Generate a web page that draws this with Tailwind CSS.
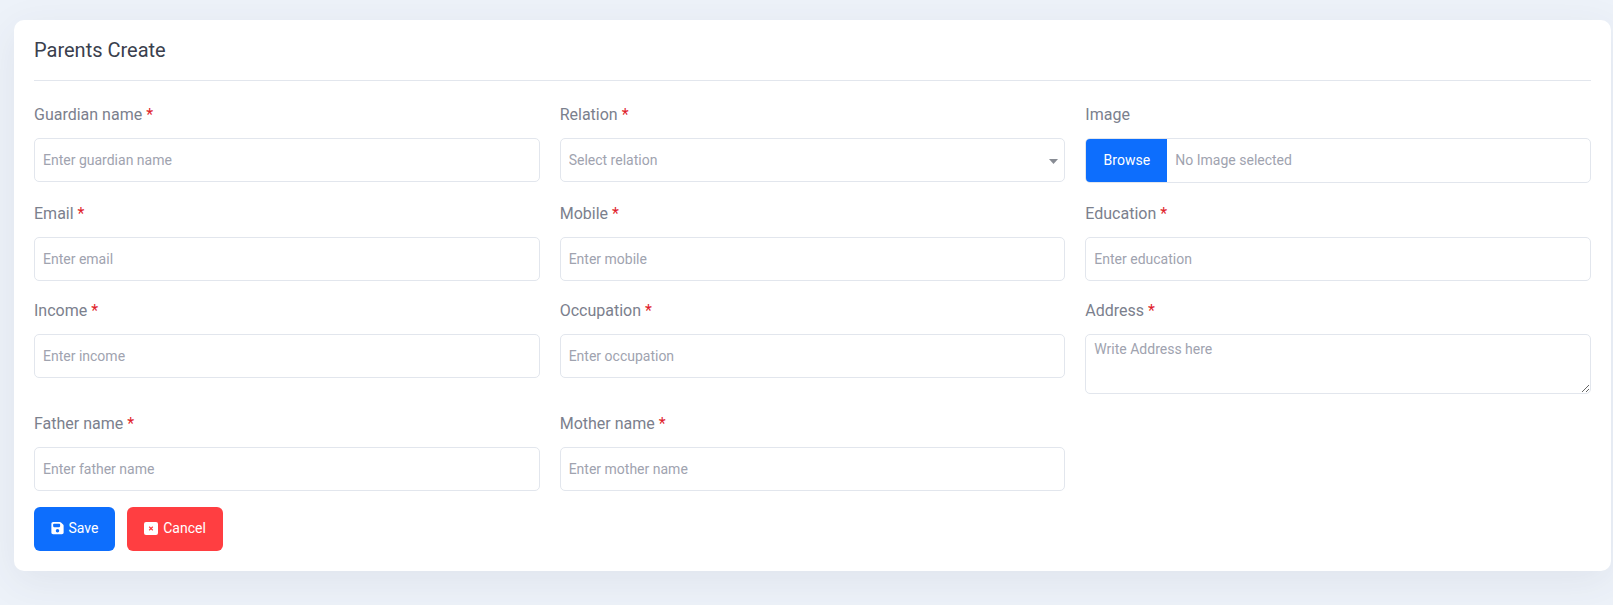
<!DOCTYPE html>
<html lang="en">
<head>
    <meta charset="UTF-8">
    <title>Parents Create</title>
    <script src="https://cdn.jsdelivr.net/npm/@tailwindcss/browser@4"></script>
</head>
<body class="bg-[#edf2f9] font-['Roboto',sans-serif] h-[605px] overflow-hidden">
    <main class="pt-5 pl-[14px] pr-[2px]">
        <div class="bg-white rounded-[10px] shadow-[0_10px_40px_rgba(60,70,90,0.08)] h-[551px] px-5">
            <h1 class="text-[20px] leading-[24px] text-[#3a404d] pt-[18px] pb-[18px] border-b border-[#e2e6ed]">Parents Create</h1>

            <form class="grid grid-cols-3 gap-x-5 pt-[22px]">
                <div class="h-[99px]">
                    <label class="block text-base leading-6 text-[#7b808d] mb-[11px]">Guardian name <span class="text-[#e01f2d]">*</span></label>
                    <input type="text" placeholder="Enter guardian name" class="w-full h-[44px] px-[8px] border border-[#e2e6ed] rounded-[5px] text-sm placeholder:text-[#a0a3af] outline-none">
                </div>
                <div class="h-[99px]">
                    <label class="block text-base leading-6 text-[#7b808d] mb-[11px]">Relation <span class="text-[#e01f2d]">*</span></label>
                    <div class="relative">
                        <select class="w-full h-[44px] px-[8px] border border-[#e2e6ed] rounded-[5px] text-sm text-[#a0a3af] bg-white appearance-none outline-none">
                            <option>Select relation</option>
                        </select>
                        <svg class="absolute right-[7px] top-[21px] w-[9px] h-[5px]" viewBox="0 0 9 5"><path d="M0 0h9L4.5 5z" fill="#888c94"/></svg>
                    </div>
                </div>
                <div class="h-[99px]">
                    <label class="block text-base leading-6 text-[#7b808d] mb-[11px]">Image</label>
                    <div class="flex items-center h-[45px] border border-[#e2e6ed] rounded-[5px] overflow-hidden">
                        <button type="button" class="h-full w-[81px] pb-[2px] bg-[#0d6efd] text-white text-sm">Browse</button>
                        <span class="pl-2 pb-[2px] text-sm text-[#a0a3af]">No Image selected</span>
                    </div>
                </div>

                <div class="h-[97px]">
                    <label class="block text-base leading-6 text-[#7b808d] mb-[11px]">Email <span class="text-[#e01f2d]">*</span></label>
                    <input type="text" placeholder="Enter email" class="w-full h-[44px] px-[8px] border border-[#e2e6ed] rounded-[5px] text-sm placeholder:text-[#a0a3af] outline-none">
                </div>
                <div class="h-[97px]">
                    <label class="block text-base leading-6 text-[#7b808d] mb-[11px]">Mobile <span class="text-[#e01f2d]">*</span></label>
                    <input type="text" placeholder="Enter mobile" class="w-full h-[44px] px-[8px] border border-[#e2e6ed] rounded-[5px] text-sm placeholder:text-[#a0a3af] outline-none">
                </div>
                <div class="h-[97px]">
                    <label class="block text-base leading-6 text-[#7b808d] mb-[11px]">Education <span class="text-[#e01f2d]">*</span></label>
                    <input type="text" placeholder="Enter education" class="w-full h-[44px] px-[8px] border border-[#e2e6ed] rounded-[5px] text-sm placeholder:text-[#a0a3af] outline-none">
                </div>

                <div class="h-[113px]">
                    <label class="block text-base leading-6 text-[#7b808d] mb-[11px]">Income <span class="text-[#e01f2d]">*</span></label>
                    <input type="text" placeholder="Enter income" class="w-full h-[44px] px-[8px] border border-[#e2e6ed] rounded-[5px] text-sm placeholder:text-[#a0a3af] outline-none">
                </div>
                <div class="h-[113px]">
                    <label class="block text-base leading-6 text-[#7b808d] mb-[11px]">Occupation <span class="text-[#e01f2d]">*</span></label>
                    <input type="text" placeholder="Enter occupation" class="w-full h-[44px] px-[8px] border border-[#e2e6ed] rounded-[5px] text-sm placeholder:text-[#a0a3af] outline-none">
                </div>
                <div class="h-[113px]">
                    <label class="block text-base leading-6 text-[#7b808d] mb-[11px]">Address <span class="text-[#e01f2d]">*</span></label>
                    <textarea placeholder="Write Address here" class="block w-full h-[60px] px-[8px] py-[4px] border border-[#e2e6ed] rounded-[5px] text-sm placeholder:text-[#a0a3af] outline-none"></textarea>
                </div>

                <div class="h-[95px]">
                    <label class="block text-base leading-6 text-[#7b808d] mb-[11px]">Father name <span class="text-[#e01f2d]">*</span></label>
                    <input type="text" placeholder="Enter father name" class="w-full h-[44px] px-[8px] border border-[#e2e6ed] rounded-[5px] text-sm placeholder:text-[#a0a3af] outline-none">
                </div>
                <div class="h-[95px]">
                    <label class="block text-base leading-6 text-[#7b808d] mb-[11px]">Mother name <span class="text-[#e01f2d]">*</span></label>
                    <input type="text" placeholder="Enter mother name" class="w-full h-[44px] px-[8px] border border-[#e2e6ed] rounded-[5px] text-sm placeholder:text-[#a0a3af] outline-none">
                </div>
            </form>

            <div class="flex gap-3">
                <button type="button" class="flex items-center justify-center gap-[5px] w-[81px] h-[44px] pb-[2px] bg-[#0d6efd] rounded-[6px] text-white text-sm">
                    <svg class="w-[13px] h-[14px]" viewBox="0 0 448 512"><path fill="#fff" d="M64 32C29 32 0 61 0 96v320c0 35 29 64 64 64h320c35 0 64-29 64-64V173c0-17-7-33-19-45l-77-77c-12-12-28-19-45-19H64zm0 96c0-18 14-32 32-32h192c18 0 32 14 32 32v64c0 18-14 32-32 32H96c-18 0-32-14-32-32v-64zm160 160a64 64 0 1 1 0 128 64 64 0 1 1 0-128z"/></svg>
                    Save
                </button>
                <button type="button" class="flex items-center justify-center gap-[5px] w-[96px] h-[44px] pb-[2px] bg-[#ff3e41] rounded-[6px] text-white text-sm">
                    <svg class="w-[14px] h-[13px]" viewBox="0 0 14 13"><rect width="14" height="13" rx="2" fill="#fff"/><path d="M5.2 4.8l3.6 3.4M8.8 4.8L5.2 8.2" stroke="#ff3e41" stroke-width="1.2"/></svg>
                    Cancel
                </button>
            </div>
        </div>
    </main>
</body>
</html>
